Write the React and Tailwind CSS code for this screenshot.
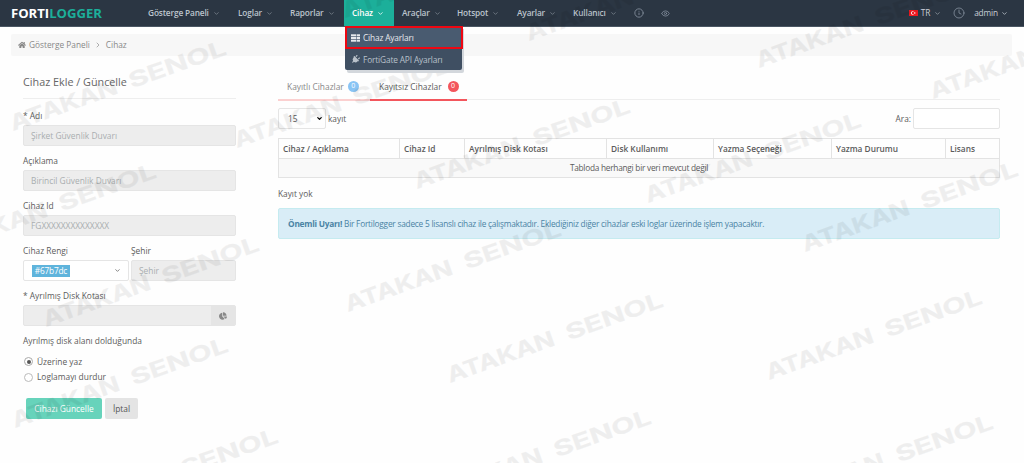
import React from "react";
import { FaHome, FaPlug, FaChartPie } from "react-icons/fa";
import { ChevronDown, ChevronRight, Info, Eye, Clock } from "lucide-react";

const WATERMARKS = [
  [450, 383], [348, 312], [769, 380], [648, 203], [805, 252], [417, 189],
  [529, 41], [759, 68], [933, 99], [438, 500], [780, 505], [65, 519],
  [15, 428], [46, 327], [-57, 254], [13, 131], [237, 148], [345, 18],
];

function Watermarks() {
  return (
    <div className="pointer-events-none absolute inset-0 overflow-hidden">
      {WATERMARKS.map(([x, y]) => (
        <div
          key={x + "-" + y}
          className="absolute h-0 w-0"
          style={{ left: x, top: y }}
        >
          <svg className="absolute bottom-0 left-0 h-[30px] w-[240px] origin-bottom-left rotate-[-19.7deg] overflow-visible fill-black stroke-black stroke-[0.3] opacity-[0.06]">
            <text x="0" y="30" textLength="113" lengthAdjust="spacingAndGlyphs" className="font-['Inter',sans-serif] text-[21.5px] font-bold">ATAKAN</text>
            <text x="126" y="30" textLength="102" lengthAdjust="spacingAndGlyphs" className="font-['Inter',sans-serif] text-[21.5px] font-bold">SENOL</text>
          </svg>
        </div>
      ))}
    </div>
  );
}

function RackIcon() {
  return (
    <svg viewBox="0 0 9 8" className="mr-[3px] h-[8px] w-[9px] fill-current">
      {[0.3, 3, 5.7].map((y) => (
        <g key={y}>
          <rect x="0" y={y} width="5" height="2" />
          <rect x="5.6" y={y} width="3.4" height="2" />
        </g>
      ))}
    </svg>
  );
}

function NavItem({ label, width, active }) {
  return (
    <div className={"flex h-full shrink-0 items-center pl-[8px] " + width + (active ? " bg-[#1caf9a] text-white" : "")}>
      <span>{label}</span>
      <ChevronDown className={"ml-[4px] size-[7px] " + (active ? "" : "opacity-60")} strokeWidth={2.5} />
    </div>
  );
}

function Label({ children }) {
  return <div className="flex h-[18px] items-center text-[8.4px] text-[#5b5b5b]">{children}</div>;
}

function Field({ placeholder, className = "w-[213px]" }) {
  return (
    <div className={"flex h-[21px] items-center rounded-[2px] border border-[#e5e5e5] bg-[#ededed] pl-[7px] text-[8.4px] text-[#a9adb0] " + className}>
      {placeholder}
    </div>
  );
}

const COLUMNS = [
  ["Cihaz / Açıklama", "w-[121px]"],
  ["Cihaz Id", "w-[65px]"],
  ["Ayrılmış Disk Kotası", "w-[142px]"],
  ["Disk Kullanımı", "w-[107px]"],
  ["Yazma Seçeneği", "w-[118px]"],
  ["Yazma Durumu", "w-[114px]"],
  ["Lisans", "w-[53px]"],
];

export default function App() {
  return (
    <div className="relative h-[463px] w-[1024px] overflow-hidden bg-[#fefefe] font-['Open_Sans',sans-serif] text-[8.3px] leading-[12px] text-[#5b5b5b]">
      <header className="relative flex h-[27px] border-b border-[#4a5663] bg-[#2b3643] text-[8.3px] font-semibold tracking-[-0.14px] text-[#bcc4cd]">
        <div className="flex w-[140px] items-center pl-[11px] text-[13.1px] font-bold tracking-normal text-white">
          <span>FORTI</span><span className="text-[#1caf9a]">LOGGER</span>
        </div>
        <NavItem label="Gösterge Paneli" width="w-[90px]" />
        <NavItem label="Loglar" width="w-[52px]" />
        <NavItem label="Raporlar" width="w-[62px]" />
        <NavItem label="Cihaz" width="w-[50px]" active />
        <NavItem label="Araçlar" width="w-[55px]" />
        <NavItem label="Hotspot" width="w-[60px]" />
        <NavItem label="Ayarlar" width="w-[56px]" />
        <NavItem label="Kullanıcı" width="w-[69px]" />
        <div className="flex items-center gap-[17px] text-[#8792a0]">
          <Info className="size-[10px]" strokeWidth={2} />
          <Eye className="size-[9px]" strokeWidth={2} />
        </div>
        <div className="ml-auto flex items-center pr-[16px] font-normal text-[#c8cfd6]">
          <span className="flex h-[6px] w-[9px] items-center justify-center bg-[#f01820]">
            <svg viewBox="0 0 9 6" className="h-[6px] w-[9px]">
              <circle cx="3.6" cy="3" r="1.7" fill="#fff" />
              <circle cx="4.1" cy="3" r="1.2" fill="#f01820" />
              <circle cx="5.8" cy="3" r="0.7" fill="#fff" />
            </svg>
          </span>
          <span className="ml-[3px]">TR</span>
          <ChevronDown className="ml-[4px] size-[7px] opacity-70" strokeWidth={2.5} />
          <Clock className="ml-[12px] size-[12px] text-[#8792a0]" strokeWidth={1.6} />
          <span className="ml-[9px]">admin</span>
          <ChevronDown className="ml-[3px] size-[7px]" strokeWidth={2.5} />
        </div>
        <div className="absolute left-[345px] top-[26px] z-10 h-[44px] w-[117px] rounded-b-[2px] bg-[#3f4f62] font-normal text-[#b9c1ca] shadow-[2px_3px_0_#d3d7dc]">
          <div className="flex h-[23px] w-[118px] items-center border-2 border-[#ee0712] bg-[#495b70] pl-[4px] text-[#e6e9ed]">
            <RackIcon />Cihaz Ayarları
          </div>
          <div className="flex h-[21px] items-center pl-[6px]">
            <FaPlug className="mr-[3px] size-[9px] rotate-45" />FortiGate API Ayarları
          </div>
        </div>
      </header>

      <div className="ml-[11px] mt-[7px] flex h-[22px] w-[1001px] items-center rounded-[2px] bg-[#f7f7f7] pl-[7px] text-[#888]">
        <FaHome className="mr-[3px] size-[8px]" />
        <span>Gösterge Paneli</span>
        <ChevronRight className="mx-[4px] size-[8px]" />
        <span>Cihaz</span>
      </div>

      <main className="flex pl-[23px]">
        <section className="w-[255px] pt-[13px]">
          <h1 className="flex h-[30px] w-[213px] items-start border-b border-[#eee] pt-[7px] text-[10.8px] text-[#666]">Cihaz Ekle / Güncelle</h1>
          <div className="mt-[8px] flex flex-col gap-[6px]">
            <div><Label>* Adı</Label><Field placeholder="Şirket Güvenlik Duvarı" /></div>
            <div><Label>Açıklama</Label><Field placeholder="Birincil Güvenlik Duvarı" /></div>
            <div><Label>Cihaz Id</Label><Field placeholder="FGXXXXXXXXXXXXXX" /></div>
            <div className="flex gap-[2px]">
              <div>
                <Label>Cihaz Rengi</Label>
                <div className="flex h-[21px] w-[106px] items-center justify-between rounded-[2px] border border-[#e5e5e5] bg-white pl-[8px] pr-[7px]">
                  <span className="flex h-[12px] w-[38px] items-center justify-center bg-[#5fb4dc] tracking-[-0.2px] text-white">#67b7dc</span>
                  <ChevronDown className="size-[7px]" strokeWidth={2.5} />
                </div>
              </div>
              <div><Label>Şehir</Label><Field placeholder="Şehir" className="w-[105px]" /></div>
            </div>
            <div>
              <Label>* Ayrılmış Disk Kotası</Label>
              <div className="flex h-[21px] w-[213px] overflow-hidden rounded-[2px] border border-[#e5e5e5] bg-[#ededed]">
                <div className="ml-auto flex w-[24px] items-center justify-center bg-[#e5e5e5] text-[#888]"><FaChartPie className="size-[8px]" /></div>
              </div>
            </div>
            <Label>Ayrılmış disk alanı dolduğunda</Label>
          </div>
          <div className="mt-[4px] text-[8.4px]">
            <div className="flex h-[15px] items-center gap-[4px] pl-[1px]">
              <span className="flex size-[9px] items-center justify-center rounded-full border border-[#aaa] bg-white"><span className="size-[4px] rounded-full bg-[#555]" /></span>
              Üzerine yaz
            </div>
            <div className="flex h-[16px] items-center gap-[4px] pl-[1px]">
              <span className="size-[9px] rounded-full border border-[#bbb] bg-white" />
              Loglamayı durdur
            </div>
          </div>
          <div className="mt-[13px] flex gap-[3px] pl-[3px] text-[8.4px]">
            <button className="h-[21px] w-[76px] rounded-[2px] bg-[#67d3bb] text-white">Cihazı Güncelle</button>
            <button className="h-[21px] w-[33px] rounded-[2px] bg-[#e4e4e4] text-[#555]">İptal</button>
          </div>
        </section>

        <section className="w-[722px] pt-[19px]">
          <div className="flex h-[26px] items-stretch">
            <div className="flex w-[92px] items-center border-b-2 border-[#fbd0d0] pl-[9px] text-[8.4px] text-[#888]">
              Kayıtlı Cihazlar
              <span className="mb-[2px] ml-[4px] flex size-[11px] items-center justify-center rounded-full bg-[#89c4f4] text-[7px] text-white">0</span>
            </div>
            <div className="flex w-[97px] items-center border-b-2 border-[#f3565d] pl-[9px] text-[8.4px]">
              Kayıtsız Cihazlar
              <span className="mb-[2px] ml-[6px] flex size-[11px] items-center justify-center rounded-full bg-[#f3565d] text-[7px] text-white">0</span>
            </div>
            <div className="mb-[1px] flex-1 border-b border-[#eee]" />
          </div>
          <div className="mt-[7px] flex h-[21px] items-center">
            <div className="flex h-[21px] w-[48px] items-center justify-between rounded-[2px] border border-[#e5e5e5] pl-[9px] pr-[2px]">
              15<ChevronDown className="size-[7px] text-black" strokeWidth={4} />
            </div>
            <span className="ml-[2px]">kayıt</span>
            <span className="ml-auto">Ara:</span>
            <div className="ml-[2px] h-[21px] w-[87px] rounded-[2px] border border-[#e5e5e5] bg-white" />
          </div>
          <div className="mt-[9px] w-[722px] border border-[#e3e3e3]">
            <div className="flex h-[20px] border-b border-[#e3e3e3] text-[8.3px] font-semibold">
              {COLUMNS.map(([label, width]) => (
                <div key={label} className={"flex shrink-0 items-center border-r border-[#e3e3e3] pl-[4px] last:border-r-0 " + width}>{label}</div>
              ))}
            </div>
            <div className="flex h-[18px] items-center justify-center bg-[#f9f9f9] tracking-[-0.26px]">Tabloda herhangi bir veri mevcut değil</div>
          </div>
          <div className="mt-[9px] flex h-[14px] items-center">Kayıt yok</div>
          <div className="mt-[7px] flex h-[31px] items-center whitespace-pre rounded-[2px] border border-[#c5ebf0] bg-[#d9edf7] pl-[9px] tracking-[-0.225px] text-[#4a83a4]">
            <b>Önemli Uyarı!</b> Bir Fortilogger sadece 5 lisanslı cihaz ile çalışmaktadır. Eklediğiniz diğer cihazlar eski loglar üzerinde işlem yapacaktır.
          </div>
        </section>
      </main>
      <Watermarks />
    </div>
  );
}
